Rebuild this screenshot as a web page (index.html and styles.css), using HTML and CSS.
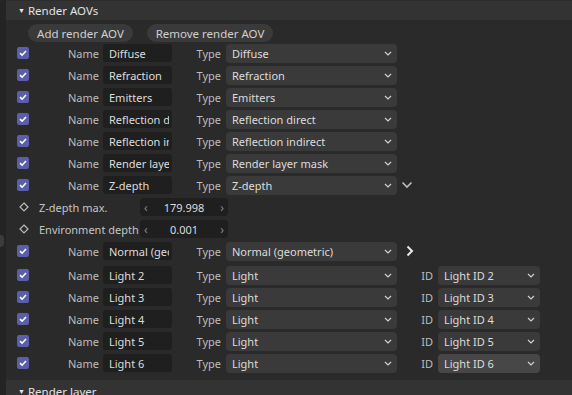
FILE: index.html
```html
<!DOCTYPE html>
<html>
<head>
<meta charset="utf-8">
<link rel="stylesheet" href="styles.css">
</head>
<body>
<div class="page">
  <div class="leftstrip"><div class="knob"></div></div>
  <div class="panel">
    <div class="section-head"><span class="tri">▼</span>Render AOVs</div>
    <div class="btnrow">
      <span class="pill pill-add">Add render AOV</span>
      <span class="pill pill-remove">Remove render AOV</span>
    </div>

    <div class="row">
      <span class="cb"><svg viewBox="0 0 12 12"><path d="M3 6.2 L5.1 8.2 L9 4" /></svg></span>
      <span class="lbl-name">Name</span><span class="name"><span class="clip">Diffuse</span></span>
      <span class="lbl-type">Type</span><span class="sel">Diffuse<svg class="chev" viewBox="0 0 8 5"><path d="M1 1 L4 4 L7 1"/></svg></span>
    </div>
    <div class="row">
      <span class="cb"><svg viewBox="0 0 12 12"><path d="M3 6.2 L5.1 8.2 L9 4" /></svg></span>
      <span class="lbl-name">Name</span><span class="name"><span class="clip">Refraction</span></span>
      <span class="lbl-type">Type</span><span class="sel">Refraction<svg class="chev" viewBox="0 0 8 5"><path d="M1 1 L4 4 L7 1"/></svg></span>
    </div>
    <div class="row">
      <span class="cb"><svg viewBox="0 0 12 12"><path d="M3 6.2 L5.1 8.2 L9 4" /></svg></span>
      <span class="lbl-name">Name</span><span class="name"><span class="clip">Emitters</span></span>
      <span class="lbl-type">Type</span><span class="sel">Emitters<svg class="chev" viewBox="0 0 8 5"><path d="M1 1 L4 4 L7 1"/></svg></span>
    </div>
    <div class="row">
      <span class="cb"><svg viewBox="0 0 12 12"><path d="M3 6.2 L5.1 8.2 L9 4" /></svg></span>
      <span class="lbl-name">Name</span><span class="name"><span class="clip">Reflection direct</span></span>
      <span class="lbl-type">Type</span><span class="sel">Reflection direct<svg class="chev" viewBox="0 0 8 5"><path d="M1 1 L4 4 L7 1"/></svg></span>
    </div>
    <div class="row">
      <span class="cb"><svg viewBox="0 0 12 12"><path d="M3 6.2 L5.1 8.2 L9 4" /></svg></span>
      <span class="lbl-name">Name</span><span class="name"><span class="clip">Reflection indirect</span></span>
      <span class="lbl-type">Type</span><span class="sel">Reflection indirect<svg class="chev" viewBox="0 0 8 5"><path d="M1 1 L4 4 L7 1"/></svg></span>
    </div>
    <div class="row">
      <span class="cb"><svg viewBox="0 0 12 12"><path d="M3 6.2 L5.1 8.2 L9 4" /></svg></span>
      <span class="lbl-name">Name</span><span class="name"><span class="clip">Render layer mask</span></span>
      <span class="lbl-type">Type</span><span class="sel">Render layer mask<svg class="chev" viewBox="0 0 8 5"><path d="M1 1 L4 4 L7 1"/></svg></span>
    </div>
    <div class="row">
      <span class="cb"><svg viewBox="0 0 12 12"><path d="M3 6.2 L5.1 8.2 L9 4" /></svg></span>
      <span class="lbl-name">Name</span><span class="name"><span class="clip">Z-depth</span></span>
      <span class="lbl-type">Type</span><span class="sel">Z-depth<svg class="chev" viewBox="0 0 8 5"><path d="M1 1 L4 4 L7 1"/></svg></span>
      <svg class="big-down" viewBox="0 0 12 8"><path d="M1.5 1.5 L6 6 L10.5 1.5"/></svg>
    </div>

    <div class="row param">
      <svg class="diamond" viewBox="0 0 10 10"><path d="M5 1 L9 5 L5 9 L1 5 Z"/></svg>
      <span class="plabel">Z-depth max.</span>
      <span class="num"><span class="arr">‹</span><span class="val">179.998</span><span class="arr">›</span></span>
    </div>
    <div class="row param">
      <svg class="diamond" viewBox="0 0 10 10"><path d="M5 1 L9 5 L5 9 L1 5 Z"/></svg>
      <span class="plabel">Environment depth</span>
      <span class="num"><span class="arr">‹</span><span class="val">0.001</span><span class="arr">›</span></span>
    </div>

    <div class="row row-normal">
      <span class="cb"><svg viewBox="0 0 12 12"><path d="M3 6.2 L5.1 8.2 L9 4" /></svg></span>
      <span class="lbl-name">Name</span><span class="name"><span class="clip">Normal (geometric)</span></span>
      <span class="lbl-type">Type</span><span class="sel">Normal (geometric)<svg class="chev" viewBox="0 0 8 5"><path d="M1 1 L4 4 L7 1"/></svg></span>
      <svg class="big-right" viewBox="0 0 8 12"><path d="M1.5 1.5 L6 6 L1.5 10.5"/></svg>
    </div>

    <div class="row">
      <span class="cb"><svg viewBox="0 0 12 12"><path d="M3 6.2 L5.1 8.2 L9 4" /></svg></span>
      <span class="lbl-name">Name</span><span class="name"><span class="clip">Light 2</span></span>
      <span class="lbl-type">Type</span><span class="sel">Light<svg class="chev" viewBox="0 0 8 5"><path d="M1 1 L4 4 L7 1"/></svg></span>
      <span class="lbl-id">ID</span><span class="sel sel-id">Light ID 2<svg class="chev" viewBox="0 0 8 5"><path d="M1 1 L4 4 L7 1"/></svg></span>
    </div>
    <div class="row">
      <span class="cb"><svg viewBox="0 0 12 12"><path d="M3 6.2 L5.1 8.2 L9 4" /></svg></span>
      <span class="lbl-name">Name</span><span class="name"><span class="clip">Light 3</span></span>
      <span class="lbl-type">Type</span><span class="sel">Light<svg class="chev" viewBox="0 0 8 5"><path d="M1 1 L4 4 L7 1"/></svg></span>
      <span class="lbl-id">ID</span><span class="sel sel-id">Light ID 3<svg class="chev" viewBox="0 0 8 5"><path d="M1 1 L4 4 L7 1"/></svg></span>
    </div>
    <div class="row">
      <span class="cb"><svg viewBox="0 0 12 12"><path d="M3 6.2 L5.1 8.2 L9 4" /></svg></span>
      <span class="lbl-name">Name</span><span class="name"><span class="clip">Light 4</span></span>
      <span class="lbl-type">Type</span><span class="sel">Light<svg class="chev" viewBox="0 0 8 5"><path d="M1 1 L4 4 L7 1"/></svg></span>
      <span class="lbl-id">ID</span><span class="sel sel-id">Light ID 4<svg class="chev" viewBox="0 0 8 5"><path d="M1 1 L4 4 L7 1"/></svg></span>
    </div>
    <div class="row">
      <span class="cb"><svg viewBox="0 0 12 12"><path d="M3 6.2 L5.1 8.2 L9 4" /></svg></span>
      <span class="lbl-name">Name</span><span class="name"><span class="clip">Light 5</span></span>
      <span class="lbl-type">Type</span><span class="sel">Light<svg class="chev" viewBox="0 0 8 5"><path d="M1 1 L4 4 L7 1"/></svg></span>
      <span class="lbl-id">ID</span><span class="sel sel-id">Light ID 5<svg class="chev" viewBox="0 0 8 5"><path d="M1 1 L4 4 L7 1"/></svg></span>
    </div>
    <div class="row">
      <span class="cb"><svg viewBox="0 0 12 12"><path d="M3 6.2 L5.1 8.2 L9 4" /></svg></span>
      <span class="lbl-name">Name</span><span class="name"><span class="clip">Light 6</span></span>
      <span class="lbl-type">Type</span><span class="sel">Light<svg class="chev" viewBox="0 0 8 5"><path d="M1 1 L4 4 L7 1"/></svg></span>
      <span class="lbl-id">ID</span><span class="sel sel-id sel-hover">Light ID 6<svg class="chev" viewBox="0 0 8 5"><path d="M1 1 L4 4 L7 1"/></svg></span>
    </div>

    <div class="section-head section-bottom"><span class="tri">▼</span>Render layer</div>
  </div>
</div>
</body>
</html>
```

FILE: styles.css
```css
html, body {
  margin: 0;
  padding: 0;
  background: #2a2a2a;
}
body {
  font-family: "Noto Sans", "Open Sans", sans-serif;
  font-size: 11px;
  color: #d6d6d6;
  width: 572px;
  height: 395px;
  overflow: hidden;
}
.page {
  display: flex;
  height: 395px;
}
.leftstrip {
  width: 6px;
  flex: none;
  background: #242424;
  position: relative;
}
.knob {
  position: absolute;
  left: -4px;
  top: 235px;
  width: 8px;
  height: 12px;
  border-radius: 6px;
  background: #3c3c3c;
}
.panel {
  flex: 1;
  display: flex;
  flex-direction: column;
}
.section-head {
  height: 20px;
  flex: none;
  background: #333333;
  border-top: 1px solid #2c2c2c;
  box-sizing: border-box;
  display: flex;
  align-items: center;
  padding-left: 12px;
  color: #e2e2e2;
  font-size: 11.5px;
}
.tri {
  font-size: 7px;
  margin-right: 3px;
  color: #e6e6e6;
}
.section-bottom {
  margin-top: 5px;
  padding-top: 4px;
}
.btnrow {
  display: flex;
  height: 22px;
  padding-top: 4px;
  box-sizing: border-box;
  padding-left: 22px;
  gap: 14px;
}
.pill {
  height: 18px;
  border-radius: 9px;
  background: #3a3a3a;
  color: #cfcfcf;
  display: flex;
  align-items: center;
  justify-content: center;
  font-size: 11.5px;
}
.pill-add { width: 105px; }
.pill-remove { width: 126px; }

.row {
  height: 22px;
  display: flex;
  align-items: center;
  flex: none;
}
.row-normal {
  margin-bottom: 2px;
}
.cb {
  width: 12px;
  height: 12px;
  margin-left: 11px;
  border-radius: 2px;
  background: #5b5ea8;
  flex: none;
  display: flex;
}
.cb svg {
  width: 12px;
  height: 12px;
  fill: none;
  stroke: #ffffff;
  stroke-width: 1.6;
}
.lbl-name {
  width: 74px;
  text-align: right;
  padding-right: 4px;
  box-sizing: border-box;
  color: #bdbdbd;
  flex: none;
}
.name {
  width: 69px;
  height: 18px;
  background: #1f1f1f;
  border-radius: 3px;
  padding: 0 3px 0 6px;
  box-sizing: border-box;
  display: flex;
  align-items: center;
  flex: none;
}
.clip {
  display: block;
  width: 100%;
  overflow: hidden;
  white-space: nowrap;
  color: #dcdcdc;
}
.lbl-type {
  width: 54px;
  text-align: right;
  padding-right: 5px;
  box-sizing: border-box;
  color: #bdbdbd;
  flex: none;
}
.sel {
  width: 171px;
  height: 19px;
  background: #3a3a3a;
  border-radius: 4px;
  padding-left: 6px;
  box-sizing: border-box;
  display: flex;
  align-items: center;
  position: relative;
  white-space: nowrap;
  color: #dcdcdc;
  flex: none;
}
.chev {
  position: absolute;
  right: 5px;
  top: 7px;
  width: 8px;
  height: 5px;
  fill: none;
  stroke: #d0d0d0;
  stroke-width: 1.2;
}
.lbl-id {
  width: 41px;
  text-align: right;
  padding-right: 5px;
  box-sizing: border-box;
  color: #bdbdbd;
  flex: none;
}
.sel-id {
  width: 102px;
}
.sel-hover {
  background: #474747;
}
.big-down {
  width: 12px;
  height: 8px;
  margin-left: 4px;
  fill: none;
  stroke: #bdbdbd;
  stroke-width: 1.6;
}
.big-right {
  width: 8px;
  height: 12px;
  margin-left: 9px;
  fill: none;
  stroke: #e8e8e8;
  stroke-width: 2;
}
.param .diamond {
  width: 10px;
  height: 10px;
  margin-left: 13px;
  fill: none;
  stroke: #bbbbbb;
  stroke-width: 1.2;
  flex: none;
}
.plabel {
  width: 111px;
  padding-left: 10px;
  box-sizing: border-box;
  color: #c4c4c4;
  white-space: nowrap;
  flex: none;
}
.num {
  width: 88px;
  height: 18px;
  background: #1f1f1f;
  border-radius: 4px;
  display: flex;
  align-items: center;
  justify-content: space-between;
  padding: 0 4px;
  box-sizing: border-box;
  flex: none;
}
.arr {
  color: #8a8a8a;
  font-size: 12px;
}
.val {
  color: #dcdcdc;
}
```
